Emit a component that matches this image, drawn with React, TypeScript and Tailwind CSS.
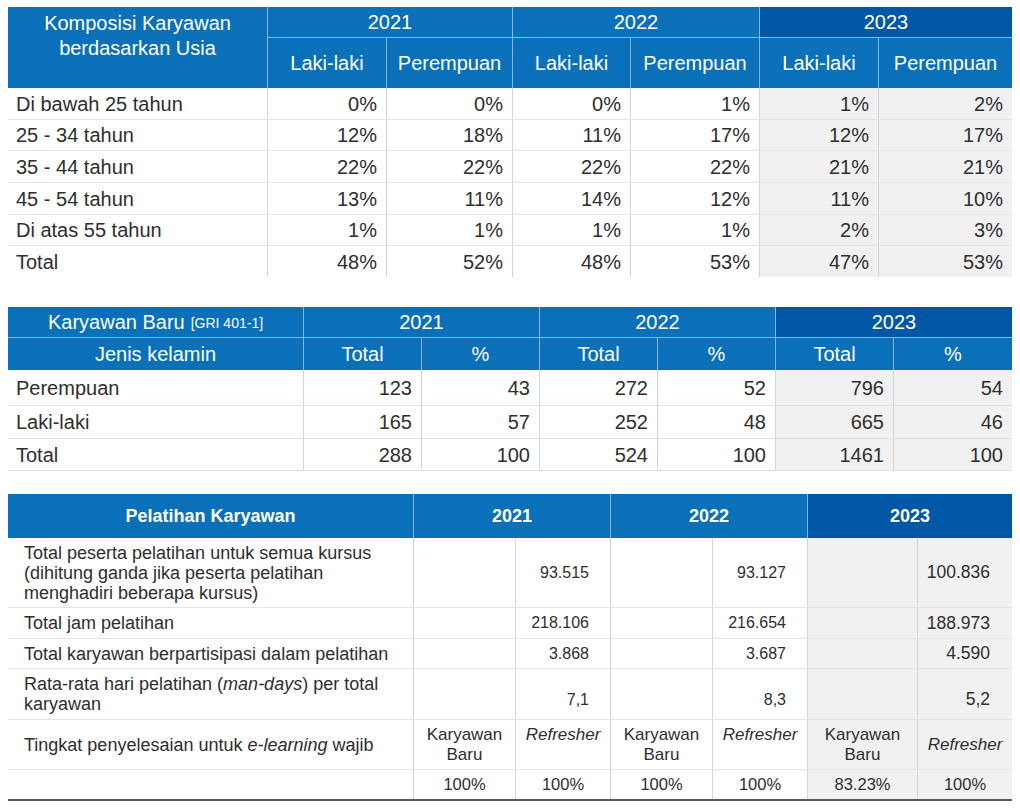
const BLUE = "bg-[#0a70b9]";
const DARK = "bg-[#0057a6]";

const t1Cols = ["w-[119px]", "w-[126px]", "w-[118px]", "w-[129px]", "w-[119px]", "w-[134px]"];
const t1Heights = ["h-[32px]", "h-[31px]", "h-[32px]", "h-[32px]", "h-[31px]", "h-[31px]"];
const t1Rows = [
  ["Di bawah 25 tahun", "0%", "0%", "0%", "1%", "1%", "2%"],
  ["25 - 34 tahun", "12%", "18%", "11%", "17%", "12%", "17%"],
  ["35 - 44 tahun", "22%", "22%", "22%", "22%", "21%", "21%"],
  ["45 - 54 tahun", "13%", "11%", "14%", "12%", "11%", "10%"],
  ["Di atas 55 tahun", "1%", "1%", "1%", "1%", "2%", "3%"],
  ["Total", "48%", "52%", "48%", "53%", "47%", "53%"],
];

const t2Cols = ["w-[118px]", "w-[118px]", "w-[118px]", "w-[118px]", "w-[118px]", "w-[119px]"];
const t2Heights = ["h-[36px]", "h-[33px]", "h-[32px]"];
const t2Rows = [
  ["Perempuan", "123", "43", "272", "52", "796", "54"],
  ["Laki-laki", "165", "57", "252", "48", "665", "46"],
  ["Total", "288", "100", "524", "100", "1461", "100"],
];

const t3Cols = ["w-[102px]", "w-[95px]", "w-[102px]", "w-[95px]", "w-[110px]", "w-[95px]"];

function Table1() {
  const groups = [
    { year: "2021", w: "w-[245px]", bg: BLUE, a: "w-[119px]", b: "w-[126px]" },
    { year: "2022", w: "w-[247px]", bg: BLUE, a: "w-[118px]", b: "w-[129px]" },
    { year: "2023", w: "w-[253px]", bg: DARK, a: "w-[119px]", b: "w-[134px]" },
  ];
  return (
    <div className="w-[1004px]">
      {/* header */}
      <div className="flex h-[81px] text-white text-[20px]">
        <div className={`w-[259px] ${BLUE} text-center leading-[25px] pt-[4px]`}>
          Komposisi Karyawan
          <br />
          berdasarkan Usia
        </div>
        {groups.map((g) => (
          <div key={g.year} className={`${g.w} flex flex-col`}>
            <div className={`h-[31px] ${g.bg} border-l border-b border-[#86b7e0] flex items-center justify-center`}>
              {g.year}
            </div>
            <div className="flex h-[50px]">
              <div className={`${g.a} ${BLUE} border-l border-[#86b7e0] flex items-center justify-center`}>Laki-laki</div>
              <div className={`${g.b} ${BLUE} border-l border-[#86b7e0] flex items-center justify-center`}>Perempuan</div>
            </div>
          </div>
        ))}
      </div>
      {/* rows */}
      {t1Rows.map((r, ri) => (
        <div
          key={r[0]}
          className={`flex text-[20px] ${t1Heights[ri]} ${ri < t1Rows.length - 1 ? "border-b border-[#e4e4e4]" : ""}`}
        >
          <div className="w-[259px] pl-[8px] flex items-center">{r[0]}</div>
          {r.slice(1).map((v, ci) => (
            <div
              key={ci}
              className={`${t1Cols[ci]} border-l border-[#d4d4d4] flex items-center justify-end pr-[9px] ${ci >= 4 ? "bg-[#f1f1f1]" : ""}`}
            >
              {v}
            </div>
          ))}
        </div>
      ))}
    </div>
  );
}

function Table2() {
  return (
    <div className="w-[1004px]">
      <div className="flex h-[31px] text-white text-[20px]">
        <div className={`w-[295px] ${BLUE} border-b border-[#86b7e0] flex items-center justify-center`}>
          <span>Karyawan Baru</span>
          <span className="text-[14px] ml-[6px] mt-[2px]">[GRI 401-1]</span>
        </div>
        <div className={`w-[236px] ${BLUE} border-l border-b border-[#86b7e0] flex items-center justify-center`}>2021</div>
        <div className={`w-[236px] ${BLUE} border-l border-b border-[#86b7e0] flex items-center justify-center`}>2022</div>
        <div className={`w-[237px] ${DARK} border-l border-b border-[#86b7e0] flex items-center justify-center`}>2023</div>
      </div>
      <div className="flex h-[32px] text-white text-[20px]">
        <div className={`w-[295px] ${BLUE} flex items-center justify-center`}>Jenis kelamin</div>
        {t2Cols.map((w, i) => (
          <div key={i} className={`${w} ${BLUE} border-l border-[#86b7e0] flex items-center justify-center`}>
            {i % 2 === 0 ? "Total" : "%"}
          </div>
        ))}
      </div>
      {t2Rows.map((r, ri) => (
        <div key={r[0]} className={`flex text-[20px] ${t2Heights[ri]} border-b border-[#e0e0e0]`}>
          <div className="w-[295px] pl-[8px] flex items-center">{r[0]}</div>
          {r.slice(1).map((v, ci) => (
            <div
              key={ci}
              className={`${t2Cols[ci]} border-l border-[#d4d4d4] flex items-center justify-end pr-[9px] ${ci >= 4 ? "bg-[#f1f1f1]" : ""}`}
            >
              {v}
            </div>
          ))}
        </div>
      ))}
    </div>
  );
}

function ValueRow({
  label,
  values,
  h,
  end,
}: {
  label: React.ReactNode;
  values: string[];
  h: string;
  end?: boolean;
}) {
  return (
    <div className={`flex ${h} border-b border-[#e4e4e4]`}>
      <div className="w-[405px] pl-[16px] pr-[8px] flex items-center text-[18px] leading-[20px]">{label}</div>
      {t3Cols.map((w, ci) => (
        <div
          key={ci}
          className={`${w} border-l border-[#d4d4d4] flex justify-end pr-[21px] ${end ? "items-end pb-[7px]" : "items-center"} ${
            ci >= 4 ? "bg-[#f1f1f1] text-[17.5px] pr-[22px]" : "text-[16px]"
          }`}
        >
          {ci % 2 === 1 ? values[(ci - 1) / 2] : ""}
        </div>
      ))}
    </div>
  );
}

function Table3() {
  const pcts = ["100%", "100%", "100%", "100%", "83.23%", "100%"];
  return (
    <div className="w-[1004px]">
      <div className="flex h-[44px] text-white text-[18px] font-bold">
        <div className={`w-[405px] ${BLUE} flex items-center justify-center`}>Pelatihan Karyawan</div>
        <div className={`w-[197px] ${BLUE} border-l border-[#86b7e0] flex items-center justify-center`}>2021</div>
        <div className={`w-[197px] ${BLUE} border-l border-[#86b7e0] flex items-center justify-center`}>2022</div>
        <div className={`w-[205px] ${DARK} border-l border-[#86b7e0] flex items-center justify-center`}>2023</div>
      </div>
      <ValueRow
        h="h-[70px]"
        label={
          <span>
            Total peserta pelatihan untuk semua kursus
            <br />
            (dihitung ganda jika peserta pelatihan
            <br />
            menghadiri beberapa kursus)
          </span>
        }
        values={["93.515", "93.127", "100.836"]}
      />
      <ValueRow h="h-[31px]" label="Total jam pelatihan" values={["218.106", "216.654", "188.973"]} />
      <ValueRow
        h="h-[30px]"
        label="Total karyawan berpartisipasi dalam pelatihan"
        values={["3.868", "3.687", "4.590"]}
      />
      <ValueRow
        h="h-[51px]"
        end
        label={
          <span>
            Rata-rata hari pelatihan (<i>man-days</i>) per total
            <br />
            karyawan
          </span>
        }
        values={["7,1", "8,3", "5,2"]}
      />
      {/* e-learning row */}
      <div className="flex h-[50px] border-b border-[#e4e4e4] text-[17px] leading-[20px]">
        <div className="w-[405px] pl-[16px] flex items-center text-[18px]">
          <span>
            Tingkat penyelesaian untuk <i>e-learning</i> wajib
          </span>
        </div>
        {t3Cols.map((w, ci) => (
          <div
            key={ci}
            className={`${w} border-l border-[#d4d4d4] flex justify-center text-center ${
              ci % 2 === 1 && ci < 4 ? "items-start pt-[5px]" : "items-center"
            } ${ci >= 4 ? "bg-[#f1f1f1]" : ""}`}
          >
            {ci % 2 === 0 ? (
              <span>
                Karyawan
                <br />
                Baru
              </span>
            ) : (
              <i>Refresher</i>
            )}
          </div>
        ))}
      </div>
      <div className="flex h-[31px] border-b-2 border-[#5a5a5a] text-[16.5px]">
        <div className="w-[405px]"></div>
        {t3Cols.map((w, ci) => (
          <div
            key={ci}
            className={`${w} border-l border-[#d4d4d4] flex items-center justify-center ${ci >= 4 ? "bg-[#f1f1f1]" : ""}`}
          >
            {pcts[ci]}
          </div>
        ))}
      </div>
    </div>
  );
}

export default function App() {
  return (
    <div className="min-h-screen w-[1020px] bg-white px-[8px] pt-[7px] text-[#2e2e2e] font-['Liberation_Sans',Arial,sans-serif]">
      <Table1 />
      <div className="h-[30px]"></div>
      <Table2 />
      <div className="h-[23px]"></div>
      <Table3 />
    </div>
  );
}
